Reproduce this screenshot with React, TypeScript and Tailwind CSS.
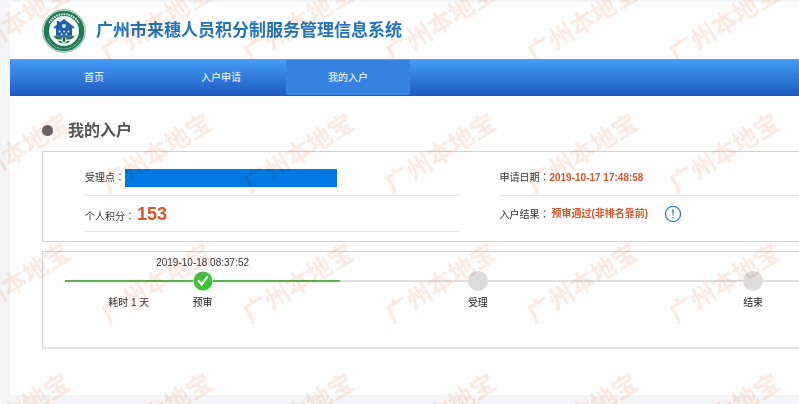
import clsx from "clsx";

const navItems = [
  { label: "首页", active: false },
  { label: "入户申请", active: false },
  { label: "我的入户", active: true },
];

const steps = [
  { name: "预审", time: "2019-10-18 08:37:52", duration: "耗时 1 天", done: true },
  { name: "受理", time: "", duration: "", done: false },
  { name: "结束", time: "", duration: "", done: false },
];

const Logo = () => (
  <svg viewBox="0 0 44 44" className="size-11 shrink-0" aria-hidden="true">
    <circle cx="22" cy="22" r="21.3" fill="#fff" stroke="#5f9c82" strokeWidth="0.8" />
    <circle cx="22" cy="22" r="17.6" fill="none" stroke="#1f7a55" strokeWidth="5.4" />
    <path d="M7.2 14A16.800 16.800 0 0 1 36.800 14" fill="none" stroke="#d5eadf" strokeWidth="2" strokeDasharray="1.6 0.9" />
    <path d="M5.600 29A17.800 17.800 0 0 0 38.400 29" fill="none" stroke="#8cc4a8" strokeWidth="1.2" strokeDasharray="0.8 0.7" />
    <circle cx="22" cy="22" r="14.600" fill="#fff" stroke="#cfe5da" strokeWidth="0.6" />
    <path d="M22 10l10.500 8.300-1.200 1.500-1.300-1V29H14V18.800l-1.300 1-1.200-1.500 3.300-2.600V12h2.700v1.600z" fill="#1d62a8" />
    <path d="M20.300 15.300h3.400v3.400h-3.400z" fill="#d8ecfa" />
    <g fill="#cfe6f6">
      <circle cx="17.500" cy="22.500" r="1.100" />
      <circle cx="22" cy="22.500" r="1.100" />
      <circle cx="26.500" cy="22.500" r="1.100" />
      <circle cx="19.700" cy="25.300" r="1.100" />
      <circle cx="24.300" cy="25.300" r="1.100" />
    </g>
    <path d="M11 27c4-.8 7.500.2 9.500 3.500-4 .8-7.500-.4-9.500-3.500zM33 27c-4-.8-7.500.2-9.500 3.500 4 .8 7.500-.4 9.500-3.500zM22 27c2.200 2 2.200 4.800 0 7-2.200-2.200-2.200-5 0-7zM15.500 31.500c2.500-.4 4.700.6 6 3-2.700.3-5-.8-6-3zM28.500 31.500c-2.500-.4-4.700.6-6 3 2.700.3 5-.8 6-3z" fill="#276b45" stroke="#fff" strokeWidth="0.4" />
  </svg>
);

const DoneMark = () => (
  <svg viewBox="0 0 20 20" className="size-5" aria-hidden="true">
    <defs>
      <linearGradient id="done" x1="0" y1="0" x2="0" y2="1">
        <stop offset="0" stopColor="#4fb748" />
        <stop offset="1" stopColor="#35cc2c" />
      </linearGradient>
    </defs>
    <circle cx="10" cy="10" r="9.6" fill="url(#done)" />
    <path d="M4.200 10.200l1.600-1.500 2.700 2.700 5.600-6.600 1.300 1.100-6.600 9z" fill="#fff" />
  </svg>
);

const NoticeIcon = () => (
  <svg viewBox="0 0 18 18" className="size-[18px]" aria-hidden="true">
    <circle cx="9" cy="9" r="7.6" fill="#fff" stroke="#3585b5" strokeWidth="1.3" />
    <path d="M8.200 4.500h1.600l-.3 6H8.500z" fill="#3585b5" />
    <circle cx="9" cy="12.700" r="0.800" fill="#3585b5" />
  </svg>
);

const Label = ({ children }: { children: string }) => (
  <dt className="shrink-0">
    {children}
    <span className="font-['Noto_Sans_CJK_TC',sans-serif]">：</span>
  </dt>
);

const Watermark = () => (
  <div
    aria-hidden="true"
    className="pointer-events-none absolute inset-0 overflow-hidden mix-blend-multiply select-none"
  >
    <div className="-mt-[42px] -ml-14 grid w-max auto-rows-[130px] grid-cols-[repeat(6,142px)]">
      {Array.from({ length: 24 }, (_, i) => (
        <div key={i} className="flex items-center justify-center">
          <span className="-rotate-[32deg] text-[25px] leading-none font-bold whitespace-nowrap text-[#fdece4]">广州本地宝</span>
        </div>
      ))}
    </div>
  </div>
);

const App = () => {
  return (
    <div className="relative min-h-screen overflow-hidden bg-[#f5f4f6] pt-0.5 pb-2 pl-2.5 font-['Liberation_Sans','Noto_Sans_CJK_SC',sans-serif] text-[10px] leading-4 text-[#333]">
      <div className="bg-[#fefefe] pb-[46px]">
        <header className="flex h-[57px] items-center gap-2.5 pl-8">
          <Logo />
          <h1 className="text-[17px] leading-6 font-bold whitespace-nowrap text-[#2474bd]">
            广州市来穗人员积分制服务管理信息系统
          </h1>
        </header>

        <nav className="relative z-10 flex h-[37px] gap-[3px] border-t border-b border-t-[#6d9bd0] border-b-[#2f55a5] bg-linear-to-b from-[#459bf6] to-[#1f5bc2] pl-[22px]">
          {navItems.map((item) => (
            <a
              key={item.label}
              href="#"
              className={clsx(
                "flex w-[124px] items-center justify-center text-white",
                item.active && "bg-[#3582e0]"
              )}
            >
              {item.label}
            </a>
          ))}
        </nav>

        <main className="pl-8">
          <div className="flex h-[55px] items-center gap-[15px] pt-3.5">
            <span className="size-[11px] rounded-full bg-[#6b6261]" />
            <h2 className="text-[16px] leading-6 font-bold text-[#555]">我的入户</h2>
          </div>

          {/* Application info */}
          <section className="border-y border-l border-[#d3d3d6] pt-2 pb-[9px] pl-[42px]">
            <dl className="grid grid-cols-[5fr_4fr] gap-x-10">
              <div className="flex h-9 items-center border-b border-[#e6e6e8]">
                <Label>受理点</Label>
                <dd className="h-[18px] w-[212px] bg-[#0278e3]" />
              </div>
              <div className="flex h-9 items-center border-b border-[#e6e6e8]">
                <Label>申请日期</Label>
                <dd className="font-bold text-[#d8572c]">2019-10-17 17:48:58</dd>
              </div>
              <div className="flex h-9 items-baseline border-b border-[#e6e6e8] pt-2">
                <Label>个人积分</Label>
                <dd className="pl-0.5 text-[18px] leading-5 font-bold text-[#d8572c]">153</dd>
              </div>
              <div className="flex h-9 items-center">
                <Label>入户结果</Label>
                <dd className="flex items-center gap-4 pl-0.5 font-bold text-[#d8572c]">
                  预审通过(非排名靠前)
                  <button type="button" aria-label="查看说明">
                    <NoticeIcon />
                  </button>
                </dd>
              </div>
            </dl>
          </section>

          {/* Progress */}
          <section className="mt-[9px] overflow-hidden border-t border-b-2 border-l border-t-[#d3d3d6] border-b-[#e3e3e5] border-l-[#d3d3d6] pt-[3px] pb-9 pl-[22px]">
            <ol className="flex">
              {steps.map((step) => (
                <li key={step.name} className="shrink-0 basis-[37.5%]">
                  <p className="h-4 text-center">{step.time}</p>
                  <div className="flex h-5 items-center">
                    <span className={clsx("h-0.5 flex-1", step.done ? "bg-[#58b254]" : "bg-[#e0e0e1]")} />
                    {step.done ? <DoneMark /> : <span className="size-5 rounded-full bg-[#dcdcdd]" />}
                    <span className={clsx("h-0.5 flex-1", step.done ? "bg-[#58b254]" : "bg-[#e0e0e1]")} />
                  </div>
                  <div className="grid h-5 grid-cols-[1fr_auto_1fr] items-end">
                    <span className="text-center">{step.duration}</span>
                    <span className="text-[#222]">{step.name}</span>
                  </div>
                </li>
              ))}
            </ol>
          </section>
        </main>
      </div>
      <Watermark />
    </div>
  );
};

export default App;
